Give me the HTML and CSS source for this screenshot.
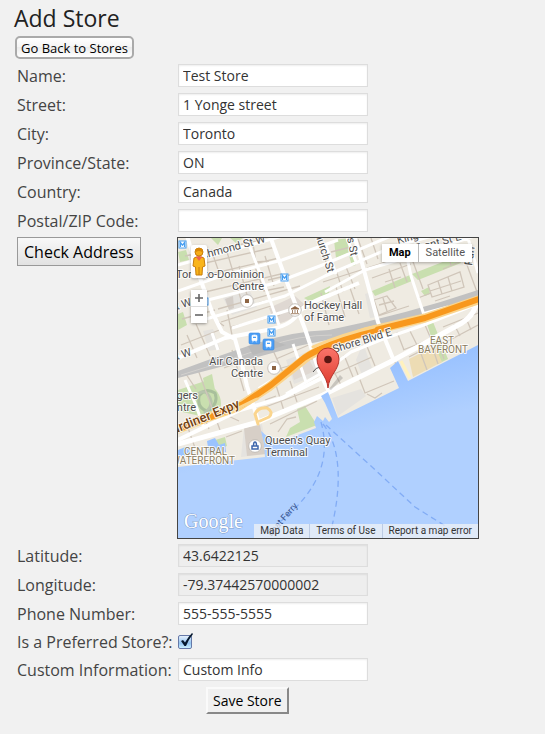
FILE: index.html
```html
<!DOCTYPE html>
<html lang="en">
<head>
<meta charset="utf-8">
<title>Add Store</title>
<link rel="stylesheet" href="styles.css">
</head>
<body>
<main class="page">
  <h1 class="title">Add Store</h1>
  <button type="button" class="back-button">Go Back to Stores</button>
  <form class="store-form">
    <label for="name">Name:</label>
    <input class="field" id="name" type="text" value="Test Store">
    <label for="street">Street:</label>
    <input class="field" id="street" type="text" value="1 Yonge street">
    <label for="city">City:</label>
    <input class="field" id="city" type="text" value="Toronto">
    <label for="state">Province/State:</label>
    <input class="field" id="state" type="text" value="ON">
    <label for="country">Country:</label>
    <input class="field" id="country" type="text" value="Canada">
    <label for="zip">Postal/ZIP Code:</label>
    <input class="field" id="zip" type="text" value="">

    <button type="button" class="check-button">Check Address</button>
    <div class="map">
      <svg class="map-canvas" viewBox="0 0 300 300" role="img" aria-label="Map of the store location">
        <defs>
          <linearGradient id="water" x1="0" y1="0" x2="0.35" y2="1">
            <stop offset="0.25" stop-color="#93beff"/>
            <stop offset="0.6" stop-color="#b0d0ff"/>
          </linearGradient>
          <linearGradient id="pinFill" x1="0" y1="0" x2="0" y2="1">
            <stop offset="0" stop-color="#fb7469"/>
            <stop offset="1" stop-color="#dc3a2e"/>
          </linearGradient>
          <g id="metro"><rect width="7" height="7" fill="#fff" stroke="#4a9ff0"/><path d="M1.500 6V1.500L3.500 4.200L5.500 1.500V6" fill="none" stroke="#4a9ff0" stroke-width="1.200"/></g>
          <g id="train"><rect width="11" height="11" rx="1.5" fill="#4a9df5" stroke="#3987db" stroke-width=".6"/><path d="M3 2.5Q5.500 1.400 8 2.500V7.500H3ZM3.500 9.300L4.500 7.500M7.500 9.300L6.500 7.500" fill="#fff" stroke="#fff" stroke-width=".7"/><path d="M4 3.700H7V5H4Z" fill="#4a9df5"/></g>
          <g id="poi"><circle r="6.300" fill="#fff" stroke="#b9b4ad" stroke-width=".8"/></g>
        </defs>
        <rect width="300" height="300" fill="#efebe2"/>

        <!-- city blocks and parks -->
        <g fill="#e5e3df">
          <path d="M45 60L72 53L79 69L54 77ZM25 93L35 91L42 111L31 113ZM108 122L134 112L145 135L116 146ZM178 122L185 105L194 130L184 137ZM66 190L84 186L89 216L63 219ZM154 160L183 151L188 158L160 178ZM187 56L193 54L199 79L192 80Z"/>
          <path fill="#dfd8d2" d="M91 70L117 58L126 66Q116 84 97 86ZM112 128L130 119L137 133L116 142Z"/>
          <path fill="#d7cfc7" d="M66 190L82 187L88 216L69 218Z"/>
          <path fill="#d3cdc7" d="M47 61L55 58L56 70L51 72Z"/>
        </g>
        <g fill="#c9dfaf">
          <path d="M0 14L8 12L11 22L2 24ZM0 76L5 74L9 87L0 92ZM33 0L44 0L40 7ZM52 0H65L58 5ZM156 2L172 0L170 15L158 20ZM170 14L174 11L178 27L174 28ZM194 53L232 37L234 43L197 58ZM234 36L280 18L283 25L240 42ZM243 53L251 49L252 56L247 58ZM249 86L255 84L270 121L260 126L259 117ZM126 60L152 48L151 55L133 64ZM0 152L27 143Q47 155 42 172L31 180L0 173ZM119 171L127 168L139 187L108 199L112 190L122 184ZM25 140L34 136L37 152L28 155ZM34 203L47 199L49 208L42 211Z"/>
        </g>
        <path d="M21 158Q27 149 37 155Q41 165 30 173Q19 171 21 158Z" fill="none" stroke="#a8bf9b" stroke-width="3"/>
        <path d="M14 162Q25 148 31 158T26 175" fill="none" stroke="#b7c5ac" stroke-width="3"/>
        <path d="M231 121L257 108L264 124L235 139Z" fill="#eddcb4"/>

        <!-- lots and lanes -->
        <g fill="none" stroke="#d0c6ba" stroke-width="1.300">
          <path d="M7 18L84 2M14 28L98 9M20 39L101 20M27 54L107 35M40 71L122 48M43 84L93 68M4 81L37 72M3 107L44 91M53 89L102 77M49 72L54 97M61 28L69 57M58 45L64 65M35 17L44 43M49 14L56 37M75 6L78 24L91 23M87 18L96 48M90 42L112 37M77 29L86 53L106 49M80 65L95 61M9 97L19 120M18 86L32 118M35 80L46 88M8 136L18 151M19 129L42 192M54 112L66 153M70 108L79 139M93 108L108 141M98 121L133 106M90 134L141 119M46 130L91 112"/>
          <path d="M140 5L151 31M145 44L186 31M153 14L181 7M180 1L189 26M193 0L200 21M158 32L165 54M168 29L177 51M143 55L151 87M158 49L167 79M171 47L181 76M189 30L229 17M194 40L233 26M196 62L209 58L218 70L201 77ZM205 60L209 73M201 67L216 63M197 79L231 68M211 31L217 50M222 25L229 44M234 21L245 51M250 47L282 34L286 49L254 59ZM260 43L264 56M270 39L274 53M252 53L283 43M289 27L299 54M240 60L253 55M257 63L272 58M207 44L223 39M207 99L218 127M219 94L226 112M231 91L240 109M247 87L253 101M225 112L258 99M188 106L197 128M166 117L175 139M153 128L163 147M156 136L194 119M177 129L187 155L216 143M189 156L197 160L204 155M231 119L260 104L266 121M242 113L249 132M254 108L260 126M98 147L106 173M112 143L119 164M82 171L141 149M87 162L98 158M92 186L139 163M100 194L109 181L118 179M46 176L61 183M48 199L64 193M8 184L17 210M27 181L31 191"/>
          <path d="M257 9L269 7L273 28M244 14L284 2M265 31L293 19M265 89L300 75M270 103L300 87M276 86L282 98M288 80L293 92M137 123L151 120M112 99L143 95"/>
        </g>

        <!-- railway -->
        <g>
          <path d="M0 133Q37 119 76 106T151 92Q229 76 300 52V61Q240 80 178 96L120 108Q62 124 0 140Z" fill="#c1c1c1"/>
          <path d="M3 137Q55 121 88 109T154 97" fill="none" stroke="#d3d1ce" stroke-width="1"/>
          <path d="M70 108L97 103L108 107L75 117Z" fill="#b9b9b9"/>
        </g>

        <!-- streets -->
        <g fill="none" stroke="#fff" stroke-linejoin="round">
          <g stroke-width="3">
            <path d="M0 27L50 13L112 -4M0 53L43 38L104 22L160 2M30 62L97 45L147 26L213 -2M28 81L107 58L147 38L217 8L300 -14M147 54L187 32L231 19L300 -3M72 9L88 51L101 87M225 0L233 38L247 80M147 5L158 36M290 0L300 35M7 142L17 165L26 190M115 106L128 144M169 0L178 24M34 95L40 112M244 76L270 69M54 90L111 72"/>
          </g>
          <path d="M9 -2L22 40L34 74L44 94L57 101L63 122L69 148L81 185M92 -2L110 47L127 91L141 133L151 154M176 -3L184 25L200 84L216 123" stroke-width="4"/>
          <path d="M0 120L47 100L89 92Q112 88 119 77Q124 67 152 57L181 45" stroke-width="4"/>
          <path d="M0 202L62 172L104 160L152 136M81 151L128 122" stroke-width="4"/>
          <path d="M0 206L80 184L145 157L212 124L284 85Q298 76 299 61" stroke-width="5"/>
          <path d="M108 156L147 133L173 114L205 101L243 88L294 68" stroke-width="3"/>
        </g>

        <!-- expressway -->
        <g fill="none" stroke-linejoin="round" stroke-linecap="round">
          <path d="M0 191L28 180L60 169L91 149L129 119Q149 107 187 94L247 80L300 62" stroke="#fbd58d" stroke-width="9"/>
          <path d="M-2 192L28 181L65 166L93 147L126 120Q149 105 190 94L247 80L301 61" stroke="#f8981d" stroke-width="6"/>
          <path d="M135 109Q165 96 196 89M50 175L79 161M80 186L77 176Q80 169 89 170Q96 174 91 179L82 183" stroke="#fbd58d" stroke-width="3"/>
        </g>

        <!-- lake -->
        <path d="M0 229L42 224L87 219L86 206L83 193L91 200L98 207L107 202L138 190L136 184L139 178L145 183L147 179L151 184L154 181L147 165L143 158L150 154L160 180L221 150L212 130L220 123L230 143L300 107V300H0Z" fill="url(#water)"/>
        <path d="M29 203L37 200L41 207L47 205L48 214L31 216ZM0 212L10 208L15 216L0 219Z" fill="#9ac3ff"/>
        <path d="M223 123L232 140" stroke="#fff2be" stroke-width="3"/>
        <g fill="none" stroke="#82acf5" stroke-width="1.300" stroke-dasharray="6 4">
          <path d="M143 184C153 220 141 252 103 283M145 186C164 210 163 250 154 288M148 187L193 228L237 269L272 291"/>
        </g>

        <!-- transit and places -->
        <use href="#metro" x="1" y="3"/><use href="#metro" x="103" y="36"/><use href="#metro" x="23" y="60"/>
        <use href="#metro" x="90" y="78"/><use href="#metro" x="90" y="91"/>
        <use href="#train" x="71" y="95"/><use href="#train" x="85" y="101"/>
        <use href="#poi" x="69" y="63"/><path d="M67 61h4v4h-4z" fill="#8d6544"/>
        <use href="#poi" x="96" y="130"/><path d="M94 128h4v4h-4z" fill="#8d6544"/>
        <use href="#poi" x="117" y="72"/><path d="M113 71L117 68.500L121 71ZM114.500 72V75M117 72V75M119.500 72V75M113 75.700H121" fill="#8d6544" stroke="#8d6544" stroke-width=".8"/>
        <use href="#poi" x="77" y="208"/><path d="M74 208H80V211H74ZM75.500 207.500Q75.500 204 77 204T78.500 207.500" fill="none" stroke="#3e67ad" stroke-width="1.500"/>

        <g class="map-text">
          <text x="86" y="40" text-anchor="end">Toronto-Dominion</text>
          <text x="86" y="52" text-anchor="end">Centre</text>
          <text x="126" y="71">Hockey Hall</text>
          <text x="126" y="83">of Fame</text>
          <text x="85" y="127" text-anchor="end">Air Canada</text>
          <text x="85" y="139" text-anchor="end">Centre</text>
          <text x="20" y="161" text-anchor="end">Rogers</text>
          <text x="18" y="173" text-anchor="end">Centre</text>
          <text x="87" y="206">Queen's Quay</text>
          <text x="87" y="218">Terminal</text>
          <text transform="translate(88 4) rotate(-15)" text-anchor="end">Richmond St W</text>
          <text transform="translate(14 67) rotate(-18)" text-anchor="end">King St W</text>
          <text transform="translate(14 117) rotate(-18)" text-anchor="end">Front St W</text>
          <text transform="translate(135 -10) rotate(72)">Church St</text>
          <text transform="translate(164 -23) rotate(78)">Jarvis St</text>
          <text transform="translate(220 6) rotate(-15)">King St E</text>
          <text transform="translate(238 14) rotate(-15)">Front St E</text>
          <text transform="translate(294 28) rotate(-82)">Parl</text>
          <text transform="translate(156 115) rotate(-17)">Shore Blvd E</text>
        </g>
        <path d="M135 134Q142 124 145 136" fill="none" stroke="#4d4d4d"/>
        <text class="map-road" transform="translate(-4 196) rotate(-22)">ardiner Expy</text>
        <g class="map-area">
          <text x="6" y="217">CENTRAL</text><text x="57" y="226" text-anchor="end">WATERFRONT</text>
          <text x="264" y="106" text-anchor="middle">EAST</text><text x="265" y="115" text-anchor="middle">BAYFRONT</text>
        </g>
        <text class="map-ferry" transform="translate(120 268) rotate(-49)" text-anchor="end">Boat Ferry</text>

        <!-- store marker -->
        <path d="M151 151L162 137L165 140L153 152Z" fill="#555" opacity=".25"/>
        <path d="M150 150C149 137 139 132 139 121A11 11 0 0 1 161 121C161 132 151 137 150 150Z" fill="url(#pinFill)" stroke="#b5352c" stroke-width="1"/>
        <circle cx="150" cy="121.500" r="3.800" fill="#5b1712"/>
        <text class="map-logo" x="6" y="290">Google</text>
      </svg>
      <button type="button" class="pegman" aria-label="Street View">
        <svg viewBox="0 0 16 32" width="16" height="32">
          <path d="M3 12Q8 9 13 12L14 20L11.500 21L11 29H5L4.500 21L2 20Z" fill="#f9b51b" stroke="#c77d0c"/>
          <circle cx="8" cy="6" r="4" fill="#f7ad18" stroke="#c77d0c"/>
          <path d="M4 4Q8 0 12 4L11 6Q8 4 5 6Z" fill="#d88707"/>
          <path d="M4.500 10.500H11.500L8 15Z" fill="#ef6350"/><path d="M8 21V29" stroke="#c77d0c"/>
        </svg>
      </button>
      <div class="zoom-controls">
        <button type="button" aria-label="Zoom in"><svg viewBox="0 0 16 16" width="16" height="16"><path d="M4 8H12M8 4V12" stroke="#666" stroke-width="1.600"/></svg></button>
        <button type="button" aria-label="Zoom out"><svg viewBox="0 0 16 16" width="16" height="16"><path d="M4 8H12" stroke="#666" stroke-width="1.600"/></svg></button>
      </div>
      <div class="map-types">
        <button type="button" class="selected">Map</button>
        <button type="button">Satellite</button>
      </div>
      <div class="map-links">
        <a href="#data">Map Data</a><a href="#terms">Terms of Use</a><a href="#report">Report a map error</a>
      </div>
    </div>

    <label for="lat">Latitude:</label>
    <input class="field" id="lat" type="text" value="43.6422125" readonly>
    <label for="lng">Longitude:</label>
    <input class="field" id="lng" type="text" value="-79.37442570000002" readonly>
    <label for="phone">Phone Number:</label>
    <input class="field" id="phone" type="text" value="555-555-5555">
    <label class="compact" for="preferred">Is a Preferred Store?:</label>
    <span class="tick">
      <input id="preferred" type="checkbox" checked>
      <svg viewBox="0 0 16 16" width="16" height="16" aria-hidden="true"><path d="M3 8L5 7L7 9.500Q10 4 14 0L15 1Q11 6 8 13H6.500Z" fill="#06192f"/></svg>
    </span>
    <label for="custom">Custom Information:</label>
    <input class="field" id="custom" type="text" value="Custom Info">
    <button type="submit" class="save-button">Save Store</button>
  </form>
</main>
</body>
</html>
```
FILE: styles.css
```css
* {
  box-sizing: border-box;
}

body {
  margin: 0;
  background: #f1f1f1;
  color: #444;
  font: 16px/23px "Open Sans", "Noto Sans", sans-serif;
}

button,
input {
  font-family: inherit;
  margin: 0;
}

.page {
  padding: 2px 14px 20px;
}

.title {
  margin: 0 0 2px;
  color: #222;
  font-size: 23px;
  font-weight: 400;
  line-height: 32px;
}

.back-button {
  display: block;
  height: 23px;
  margin-left: 1px;
  padding: 0 4px;
  border: 2px solid #aaa;
  border-radius: 5px;
  background: linear-gradient(#fff, #f4f4f4 50%, #ececec 50%, #fff);
  color: #000;
  font-size: 13px;
  line-height: 18px;
}

.store-form {
  display: grid;
  grid-template-columns: 161px minmax(0, 1fr);
  gap: 6px 0;
  align-items: start;
  padding: 5px 3px 0;
}

.store-form label {
  height: 23px;
  line-height: 25px;
  white-space: nowrap;
}

.store-form .compact {
  height: 21px;
  line-height: 23px;
}

.field {
  width: 190px;
  max-width: 100%;
  height: 23px;
  padding: 0 4px;
  border: 1px solid #ddd;
  background: #fff;
  box-shadow: inset 0 1px 2px rgba(0, 0, 0, 0.07);
  color: #333;
  font-size: 14px;
  line-height: 21px;
}

.field:read-only {
  background: #eee;
}

.check-button {
  justify-self: start;
  height: 29px;
  margin-top: -1px;
  padding: 0 6px;
  border: 1px solid #999;
  background: linear-gradient(#f8f8f8, #e2e2e2);
  color: #000;
  font-size: 16px;
  line-height: 24px;
}

.map {
  position: relative;
  width: 302px;
  max-width: 100%;
  margin: -1px 0 -1px -1px;
  border: 1px solid #444;
  overflow: hidden;
}

.map-canvas {
  display: block;
  width: 100%;
}

.map text {
  font-family: Roboto, sans-serif;
  paint-order: stroke;
  stroke: #fff;
  stroke-linejoin: round;
  stroke-opacity: 0.85;
  stroke-width: 2px;
}

.map-text {
  fill: #4d4d4d;
  font-size: 11px;
}

.map .map-road {
  fill: #704214;
  font-size: 13px;
  font-weight: 500;
}

.map-area {
  fill: #8b7d60;
  font-size: 10px;
}

.map .map-ferry {
  fill: #36538d;
  font-size: 9px;
  stroke: none;
}

.map .map-logo {
  fill: #fff;
  font-family: "Liberation Serif", serif;
  font-size: 20px;
  stroke: #7897c4;
  stroke-width: 1px;
}

.map button {
  display: block;
  padding: 0;
  border: 0;
  background: #fff;
}

.map button svg {
  display: block;
}

.map .pegman {
  position: absolute;
  left: 13px;
  top: 7px;
  width: 16px;
  height: 33px;
  border-radius: 2px;
  box-shadow: 0 1px 3px rgba(0, 0, 0, 0.3);
}

.zoom-controls {
  position: absolute;
  left: 13px;
  top: 52px;
  border-radius: 2px;
  box-shadow: 0 1px 3px rgba(0, 0, 0, 0.4);
}

.zoom-controls button + button {
  border-top: 1px solid #ddd;
}

.map-types {
  position: absolute;
  top: 6px;
  right: 6px;
  display: flex;
  box-shadow: 0 1px 3px rgba(0, 0, 0, 0.3);
}

.map .map-types button {
  height: 18px;
  padding: 0 7px;
  color: #555;
  font: 11px/18px Roboto, sans-serif;
}

.map .map-types .selected {
  border-right: 1px solid #bbb;
  color: #000;
  font-weight: 700;
}

.map-links {
  position: absolute;
  right: 0;
  bottom: 0;
  display: flex;
  background: rgba(245, 245, 245, 0.7);
  font: 10px/14px Roboto, sans-serif;
  white-space: nowrap;
}

.map-links a {
  padding: 0 6px;
  color: #333;
  text-decoration: none;
}

.map-links a + a {
  border-left: 1px solid #bccbe4;
}

.tick {
  position: relative;
  height: 21px;
}

.tick input {
  display: block;
  width: 14px;
  height: 14px;
  margin: 4px 0 0;
  appearance: none;
  border: 1px solid #6679a8;
  border-radius: 2px;
  background: linear-gradient(#e4effc, #93c4f2 60%, #cdf1ff);
}

.tick svg {
  position: absolute;
  left: 0;
  top: 2px;
  pointer-events: none;
}

.save-button {
  grid-column: 2;
  justify-self: start;
  height: 27px;
  margin-left: 28px;
  padding: 0 5px;
  border: 2px solid;
  border-color: #fafafa #888 #888 #fafafa;
  background: #f0f0f0;
  color: #000;
  font-size: 14px;
  line-height: 22px;
}
```
